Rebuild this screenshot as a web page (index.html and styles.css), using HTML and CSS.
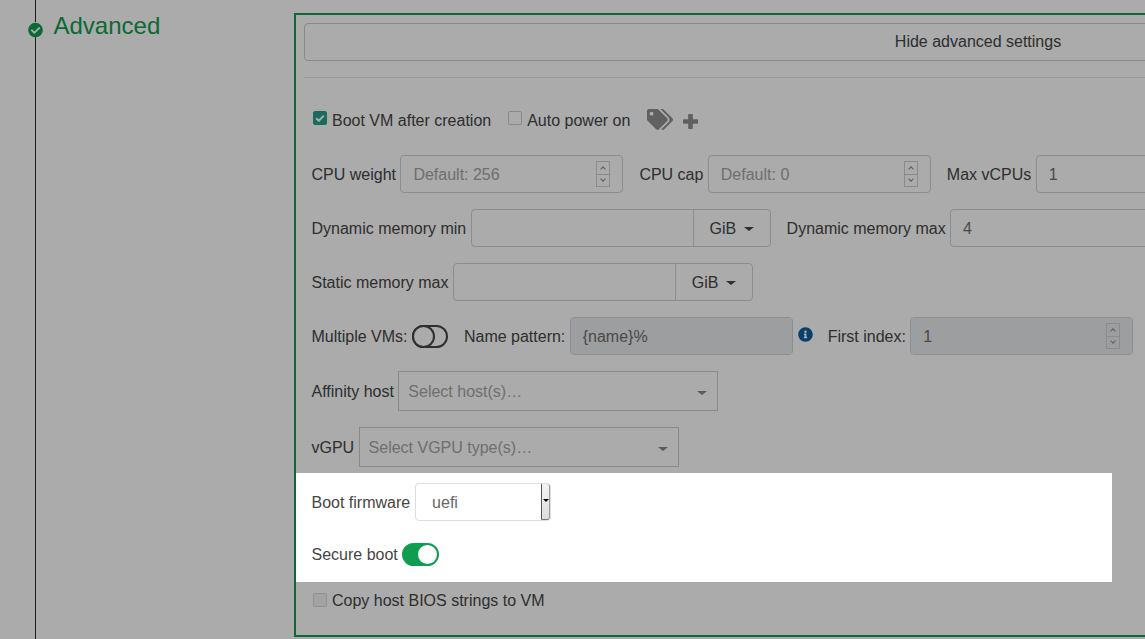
FILE: index.html
```html
<!DOCTYPE html>
<html lang="en">

<head>
    <meta charset="UTF-8" />
    <title>New VM</title>
    <link rel="stylesheet" href="styles.css">
</head>

<body>
    <div class="page">
        <div class="step">
            <span class="step-icon">
                <svg viewBox="0 0 512 512" width="16" height="16">
                    <path fill="#0f9d4f" d="M504 256c0 136.967-111.033 248-248 248S8 392.967 8 256 119.033 8 256 8s248 111.033 248 248zM227.314 387.314l184-184c6.248-6.248 6.248-16.379 0-22.627l-22.627-22.627c-6.248-6.249-16.379-6.25-22.628 0L216 308.118l-70.059-70.059c-6.248-6.248-16.379-6.248-22.628 0l-22.627 22.627c-6.248 6.248-6.248 16.379 0 22.627l104 104c6.249 6.249 16.379 6.249 22.628.001z" />
                </svg>
            </span>
            <h2 class="step-title">Advanced</h2>
        </div>

        <div class="panel">
            <button class="toggle-btn" type="button">Hide advanced settings</button>
            <hr class="sep">

            <div class="row row-checks">
                <label class="check"><span class="box box-on">
                        <svg viewBox="0 0 14 14" width="14" height="14">
                            <path d="M3.2 7.2l2.6 2.6 5-5.2" fill="none" stroke="#fff" stroke-width="2" />
                        </svg>
                    </span>Boot VM after creation</label>
                <label class="check"><span class="box"></span>Auto power on</label>
                <svg class="tags" viewBox="0 0 640 512" width="26" height="21">
                    <path fill="#8f8f8f" d="M497.941 225.941L286.059 14.059A48 48 0 0 0 252.118 0H48C21.49 0 0 21.49 0 48v204.118a48 48 0 0 0 14.059 33.941l211.882 211.882c18.744 18.745 49.136 18.746 67.882 0l204.118-204.118c18.745-18.745 18.745-49.137 0-67.882zM112 160c-26.51 0-48-21.49-48-48s21.49-48 48-48 48 21.49 48 48-21.49 48-48 48zm513.941 133.823L421.823 497.941c-18.745 18.745-49.137 18.745-67.882 0l-.36-.36L527.64 323.522c16.999-16.999 26.36-39.6 26.36-63.64s-9.362-46.641-26.36-63.64L331.397 0h48.721a48 48 0 0 1 33.941 14.059l211.882 211.882c18.745 18.745 18.745 49.137 0 67.882z" />
                </svg>
                <svg class="plus" viewBox="0 0 15 15" width="15" height="15">
                    <path fill="#8f8f8f" d="M6 0h3a.8.8 0 0 1 .8.8V5.2h4.4a.8.8 0 0 1 .8.8v3a.8.8 0 0 1-.8.8H9.8v4.4a.8.8 0 0 1-.8.8H6a.8.8 0 0 1-.8-.8V9.8H.8A.8.8 0 0 1 0 9V6a.8.8 0 0 1 .8-.8h4.4V.8A.8.8 0 0 1 6 0z" />
                </svg>
            </div>

            <div class="row">
                <span class="lbl">CPU weight</span>
                <div class="field spin"><input type="text" placeholder="Default: 256">
                    <span class="spinner"><i class="up"></i><i class="down"></i></span>
                </div>
                <span class="lbl">CPU cap</span>
                <div class="field spin"><input type="text" placeholder="Default: 0">
                    <span class="spinner"><i class="up"></i><i class="down"></i></span>
                </div>
                <span class="lbl">Max vCPUs</span>
                <div class="field"><input type="text" value="1"></div>
            </div>

            <div class="row">
                <span class="lbl">Dynamic memory min</span>
                <div class="group"><input type="text">
                    <span class="unit">GiB<b class="caret"></b></span>
                </div>
                <span class="lbl">Dynamic memory max</span>
                <div class="field"><input type="text" value="4"></div>
            </div>

            <div class="row">
                <span class="lbl">Static memory max</span>
                <div class="group"><input type="text">
                    <span class="unit">GiB<b class="caret"></b></span>
                </div>
            </div>

            <div class="row">
                <span class="lbl">Multiple VMs:</span>
                <span class="switch"></span>
                <span class="lbl">Name pattern:</span>
                <div class="field field-info"><input type="text" value="{name}%" disabled></div>
                <svg class="info" viewBox="0 0 512 512" width="15" height="15">
                    <path fill="#0f5fa0" d="M256 8C119.043 8 8 119.083 8 256c0 136.997 111.043 248 248 248s248-111.003 248-248C504 119.083 392.957 8 256 8zm0 110c23.196 0 42 18.804 42 42s-18.804 42-42 42-42-18.804-42-42 18.804-42 42-42zm56 254c0 6.627-5.373 12-12 12h-88c-6.627 0-12-5.373-12-12v-24c0-6.627 5.373-12 12-12h12v-64h-12c-6.627 0-12-5.373-12-12v-24c0-6.627 5.373-12 12-12h64c6.627 0 12 5.373 12 12v100h12c6.627 0 12 5.373 12 12v24z" />
                </svg>
                <span class="lbl">First index:</span>
                <div class="field spin"><input type="text" value="1" disabled>
                    <span class="spinner"><i class="up"></i><i class="down"></i></span>
                </div>
            </div>

            <div class="row row-select">
                <span class="lbl">Affinity host</span>
                <div class="picker">Select host(s)…<b class="caret caret-gray"></b></div>
            </div>

            <div class="row row-select">
                <span class="lbl">vGPU</span>
                <div class="picker">Select VGPU type(s)…<b class="caret caret-gray"></b></div>
            </div>

            <div class="highlight">
                <div class="row">
                    <span class="lbl">Boot firmware</span>
                    <div class="native-select">uefi<span class="native-arrow"></span></div>
                </div>
                <div class="row row-secure">
                    <span class="lbl">Secure boot</span>
                    <span class="switch switch-on"></span>
                </div>
            </div>

            <div class="row row-copy">
                <label class="check"><span class="box box-off"></span>Copy host BIOS strings to VM</label>
            </div>
        </div>
    </div>

    <div class="dim"></div>
</body>

</html>
```

FILE: styles.css
```css
*,
*::before,
*::after {
    box-sizing: border-box;
}

html,
body {
    margin: 0;
    padding: 0;
    height: 100%;
    overflow: hidden;
    background: #fff;
    color: #464646;
    font-family: "Liberation Sans", Arial, sans-serif;
    font-size: 16px;
}

.page {
    display: flex;
    width: 1800px;
    height: 639px;
    padding-top: 13px;
}

/* dark layer over everything except the highlighted block */
.dim {
    position: absolute;
    top: 0;
    left: 0;
    right: 0;
    bottom: 0;
    background: rgba(0, 0, 0, 0.33);
    z-index: 1;
}

.step {
    display: flex;
    flex: none;
    width: 294px;
    position: relative;
    align-items: flex-start;
    margin-top: -13px;
    padding: 12px 0 0 53.5px;
    height: 639px;
}

.step::before {
    content: "";
    position: absolute;
    left: 35px;
    top: 0;
    bottom: 0;
    width: 1px;
    background: #2a2a2a;
}

.step-icon {
    position: absolute;
    left: 28px;
    top: 22px;
    width: 15px;
    height: 15px;
    border-radius: 50%;
    background: #fff;
    display: flex;
    align-items: center;
    justify-content: center;
}

.step-title {
    margin: 0;
    font-size: 24px;
    font-weight: 400;
    line-height: 28px;
    color: #0f9d4f;
}

.panel {
    flex: none;
    width: 1366px;
    height: 624px;
    border: 2px solid #0f9d4f;
    padding: 8px;
}

.toggle-btn {
    display: block;
    width: 100%;
    height: 38px;
    padding: 0 0 0 2px;
    background: #fff;
    border: 1px solid #ccc;
    border-radius: 4px;
    font: inherit;
    color: inherit;
}

.sep {
    margin: 16px 0 0;
    border: 0;
    border-top: 1px solid #e6e6e6;
}

.row {
    display: flex;
    align-items: center;
    margin-bottom: 16px;
    padding-left: 7.5px;
    height: 38px;
}

.lbl {
    margin-right: 4.4px;
    padding-top: 2px;
}

.row-checks {
    margin-top: 30px;
    margin-bottom: 23px;
    height: 24px;
    padding-left: 9px;
}

.check {
    display: flex;
    align-items: center;
    margin-right: 17px;
    padding-top: 2px;
}

.box {
    flex: none;
    width: 14px;
    height: 14px;
    margin-right: 5px;
    margin-top: -6px;
    border: 1px solid #ccc;
    border-radius: 2px;
    background: #fff;
    display: flex;
}

.box-on {
    background: #28a08a;
    border-color: #28a08a;
}

.box svg {
    flex: none;
    margin: -1px 0 0 -1px;
}

.box-off {
    margin-top: -2px;
    background: #f4f4f4;
    border-color: #d8d8d8;
}

.tags {
    margin-top: -2px;
}

.plus {
    margin-left: 10px;
    margin-top: 2px;
}

input {
    width: 100%;
    height: 100%;
    border: 0;
    padding: 2px 12px 0;
    background: transparent;
    font: inherit;
    color: #6e6e6e;
    outline: none;
}

input::placeholder {
    color: #a6a6a6;
}

.field {
    position: relative;
    width: 223px;
    height: 38px;
    margin-right: 16px;
    border: 1px solid #ced4da;
    border-radius: 4px;
    background: #fff;
    flex: none;
}

.field input:disabled {
    background: #e9ecef;
    border-radius: 3px;
}

.field-info {
    margin-right: 5px;
}

.info {
    flex: none;
    margin-right: 15px;
    margin-top: -4px;
}

.spinner {
    position: absolute;
    right: 12px;
    top: 5px;
    width: 14px;
    height: 26px;
    border: 1px solid #d0d0d0;
    display: flex;
    flex-direction: column;
}

.spinner i {
    flex: 1;
    position: relative;
}

.spinner .up {
    border-bottom: 1px solid #d0d0d0;
}

.spinner i::after {
    content: "";
    position: absolute;
    left: 4px;
    width: 4px;
    height: 4px;
    border-left: 1px solid #8a8a8a;
    border-top: 1px solid #8a8a8a;
}

.spinner .up::after {
    top: 5px;
    transform: rotate(45deg);
}

.spinner .down::after {
    top: 2px;
    transform: rotate(225deg);
}

.group {
    display: flex;
    width: 300px;
    height: 38px;
    margin-right: 16px;
    flex: none;
    border: 1px solid #ced4da;
    border-radius: 4px;
    background: #fff;
}

.group input {
    flex: 1;
    width: auto;
    min-width: 0;
}

.unit {
    display: flex;
    align-items: center;
    width: 77px;
    flex: none;
    padding: 2px 0 0 16px;
    border-left: 1px solid #ced4da;
}

.caret {
    width: 0;
    height: 0;
    margin-left: 8px;
    border-left: 5px solid transparent;
    border-right: 5px solid transparent;
    border-top: 4px solid #464646;
}

.caret-gray {
    position: absolute;
    right: 10px;
    top: 19px;
    margin: 0;
    border-top-color: #888;
}

.switch {
    position: relative;
    width: 36px;
    height: 23px;
    margin-right: 16px;
    flex: none;
    border: 2px solid #464646;
    border-radius: 12px;
    background: #fff;
}

.switch::before {
    content: "";
    position: absolute;
    left: -2px;
    top: -2px;
    width: 23px;
    height: 23px;
    border: 2px solid #464646;
    border-radius: 50%;
    background: #fff;
}

.switch-on {
    width: 37px;
    margin-right: 0;
    background: #0f9d4f;
    border-color: #0f9d4f;
}

.switch-on::before {
    left: auto;
    right: 0;
    top: 0;
    width: 19px;
    height: 19px;
    border: 0;
}

.row-select {
    height: 40px;
}

.picker {
    position: relative;
    width: 320px;
    height: 40px;
    padding: 0 9px;
    line-height: 39px;
    border: 1px solid #ccc;
    background: #fff;
    color: #a6a6a6;
}

.highlight {
    position: relative;
    z-index: 2;
    width: 816px;
    height: 109px;
    margin: -10px 0 6px -8px;
    padding: 10px 0 0 8px;
    background: #fff;
}

.highlight .row {
    margin-bottom: 0;
}

.native-select {
    position: relative;
    width: 136px;
    height: 38px;
    padding-left: 16px;
    line-height: 38px;
    border: 1px solid #ddd;
    border-radius: 4px;
    color: #666;
    margin-left: 0.5px;
}

.native-arrow {
    position: absolute;
    right: 0;
    top: 0;
    bottom: 0;
    width: 9px;
    background: linear-gradient(#f4f4f4, #dcdcdc);
    border-left: 1px solid #555;
    border-right: 1px solid #999;
    border-bottom: 1px solid #777;
    border-radius: 0 3px 3px 0;
}

.native-arrow::after {
    content: "";
    position: absolute;
    left: 1px;
    top: 15px;
    border-left: 3px solid transparent;
    border-right: 3px solid transparent;
    border-top: 3px solid #000;
}

.row-secure {
    margin-top: 14px;
    height: 38px;
}

.row-copy {
    height: 24px;
    padding-left: 9px;
}
```
